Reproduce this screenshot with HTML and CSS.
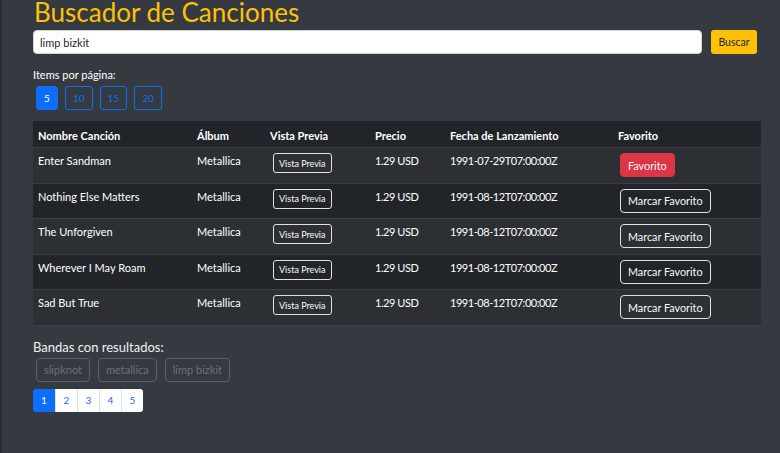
FILE: index.html
```html
<!DOCTYPE html>
<html lang="es">
<head>
<meta charset="utf-8">
<title>Buscador de Canciones</title>
<link rel="stylesheet" href="styles.css">
</head>
<body>
<div class="page">
  <h2 class="title">Buscador de Canciones</h2>
  <div class="search">
    <input class="search-input" type="text" value="limp bizkit">
    <button class="btn-buscar">Buscar</button>
  </div>
  <div class="label">Items por página:</div>
  <div class="per-page">
    <button class="pp active">5</button>
    <button class="pp">10</button>
    <button class="pp">15</button>
    <button class="pp">20</button>
  </div>
  <table class="songs">
    <thead>
      <tr>
        <th class="c-name">Nombre Canción</th>
        <th class="c-album">Álbum</th>
        <th class="c-prev">Vista Previa</th>
        <th class="c-price">Precio</th>
        <th class="c-date">Fecha de Lanzamiento</th>
        <th class="c-fav">Favorito</th>
      </tr>
    </thead>
    <tbody>
      <tr>
        <td>Enter Sandman</td><td>Metallica</td>
        <td><button class="btn-prev">Vista Previa</button></td>
        <td class="num">1.29 USD</td><td class="num">1991-07-29T07:00:00Z</td>
        <td><button class="btn-fav on">Favorito</button></td>
      </tr>
      <tr>
        <td>Nothing Else Matters</td><td>Metallica</td>
        <td><button class="btn-prev">Vista Previa</button></td>
        <td class="num">1.29 USD</td><td class="num">1991-08-12T07:00:00Z</td>
        <td><button class="btn-fav">Marcar Favorito</button></td>
      </tr>
      <tr>
        <td>The Unforgiven</td><td>Metallica</td>
        <td><button class="btn-prev">Vista Previa</button></td>
        <td class="num">1.29 USD</td><td class="num">1991-08-12T07:00:00Z</td>
        <td><button class="btn-fav">Marcar Favorito</button></td>
      </tr>
      <tr>
        <td>Wherever I May Roam</td><td>Metallica</td>
        <td><button class="btn-prev">Vista Previa</button></td>
        <td class="num">1.29 USD</td><td class="num">1991-08-12T07:00:00Z</td>
        <td><button class="btn-fav">Marcar Favorito</button></td>
      </tr>
      <tr>
        <td>Sad But True</td><td>Metallica</td>
        <td><button class="btn-prev">Vista Previa</button></td>
        <td class="num">1.29 USD</td><td class="num">1991-08-12T07:00:00Z</td>
        <td><button class="btn-fav">Marcar Favorito</button></td>
      </tr>
    </tbody>
  </table>
  <div class="bands-label">Bandas con resultados:</div>
  <div class="bands">
    <button class="band" disabled>slipknot</button>
    <button class="band" disabled>metallica</button>
    <button class="band" disabled>limp bizkit</button>
  </div>
  <ul class="pagination">
    <li class="pg active">1</li>
    <li class="pg">2</li>
    <li class="pg">3</li>
    <li class="pg">4</li>
    <li class="pg">5</li>
  </ul>
</div>
</body>
</html>
```

FILE: styles.css
```css
* { box-sizing: border-box; }
html, body {
  margin: 0;
  height: 100%;
}
body {
  background: #343a40;
  border-left: 2px solid #2a2b2d;
  font-family: Lato, "Noto Sans", sans-serif;
  font-size: 11px;
  color: #fff;
  overflow: hidden;
}
.page {
  padding: 0 19px 0 31px;
}
.title {
  margin: -4px 0 0 1px;
  font-size: 26px;
  font-weight: 400;
  line-height: 33px;
  color: #ffc107;
}
.search {
  display: flex;
  gap: 9px;
  margin-top: 1px;
  padding-right: 4px;
}
.search-input {
  flex: 1;
  height: 24px;
  border: 1px solid #ced4da;
  border-radius: 4px;
  padding: 0 6px;
  font-family: inherit;
  font-size: 11px;
  color: #212529;
  background: #fff;
}
.btn-buscar {
  height: 24px;
  width: 46px;
  padding: 0;
  border: 0;
  border-radius: 3px;
  background: #ffc107;
  color: #212529;
  font-family: inherit;
  font-size: 10.5px;
}
.label {
  margin-top: 13px;
  line-height: 16px;
}
.per-page {
  display: flex;
  gap: 7px;
  margin-top: 3px;
  padding-left: 3px;
}
.pp {
  height: 24px;
  min-width: 22px;
  padding: 0 7px;
  border: 1px solid #0d6efd;
  border-radius: 3px;
  background: transparent;
  color: #0d6efd;
  font-family: inherit;
  font-size: 10px;
}
.pp.active {
  background: #0d6efd;
  color: #fff;
}
.songs {
  margin-top: 11px;
  width: 100%;
  border-collapse: collapse;
  background: #212529;
}
.songs th, .songs td {
  text-align: left;
  vertical-align: top;
  padding: 5px 5px;
  border-bottom: 1px solid #3a3f44;
}
.songs th {
  font-weight: 700;
  padding: 7px 5px 3px;
  line-height: 16px;
}
.songs td {
  line-height: 16px;
  height: 35.6px;
  padding-top: 5px;
}
.songs td.num {
  letter-spacing: -0.45px;
}
.songs tbody tr:nth-child(odd) {
  background: #2c3034;
}
.c-name { width: 159px; }
.c-album { width: 73px; }
.c-prev { width: 105px; }
.c-price { width: 75px; }
.c-date { width: 168px; }
.btn-prev {
  margin: 0 0 0 3px;
  height: 20px;
  padding: 0 5px;
  border: 1px solid #dee2e6;
  border-radius: 3px;
  background: transparent;
  color: #f8f9fa;
  font-family: inherit;
  font-size: 9px;
}
.btn-fav {
  margin: 0 0 0 2px;
  height: 24px;
  padding: 0 7px;
  border: 1px solid #dee2e6;
  border-radius: 4px;
  background: transparent;
  color: #f8f9fa;
  font-family: inherit;
  font-size: 10.8px;
}
.btn-fav.on {
  background: #dc3545;
  border-color: #dc3545;
}
.bands-label {
  margin-top: 13px;
  font-size: 13px;
  line-height: 16px;
  color: #f1f1f1;
}
.bands {
  display: flex;
  gap: 8px;
  margin-top: 3px;
  padding-left: 3px;
}
.band {
  height: 24px;
  padding: 0 7px;
  border: 1px solid #5c6166;
  border-radius: 4px;
  background: transparent;
  color: #6c7177;
  font-family: inherit;
  font-size: 11px;
}
.pagination {
  display: flex;
  list-style: none;
  margin: 7px 0 0 0;
  padding: 0;
}
.pg {
  width: 22px;
  height: 23px;
  line-height: 23px;
  text-align: center;
  background: #fff;
  color: #0d6efd;
  border-left: 1px solid #dee2e6;
  font-size: 10px;
}
.pg:first-child {
  border-left: 0;
  border-radius: 3px 0 0 3px;
}
.pg:last-child {
  border-radius: 0 3px 3px 0;
}
.pg.active {
  background: #0d6efd;
  color: #fff;
}
```
